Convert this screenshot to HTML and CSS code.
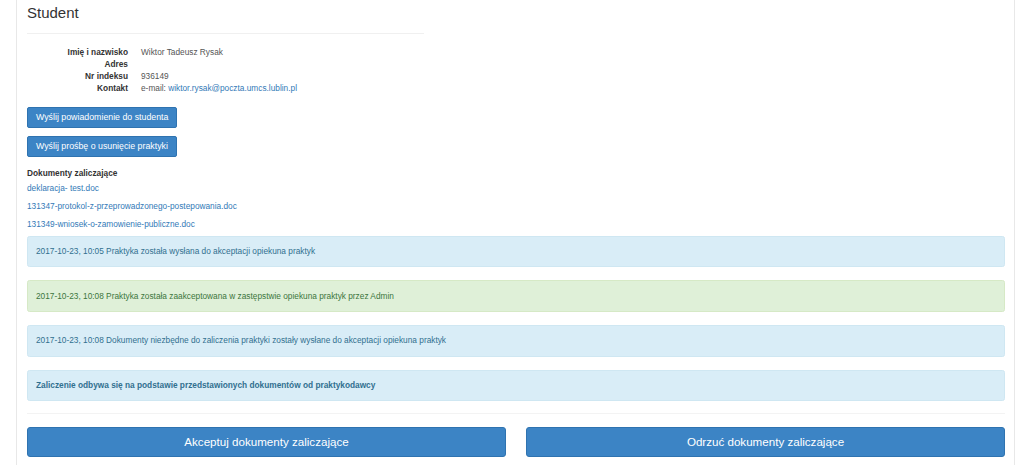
FILE: index.html
```html
<!DOCTYPE html>
<html lang="pl">
<head>
<meta charset="UTF-8">
<meta name="viewport" content="width=device-width, initial-scale=1.0">
<title>Student</title>
<link rel="stylesheet" href="styles.css">
</head>
<body>

<div class="page">
    <div class="header">
        <h3>Student</h3>
        <hr class="header-line">
    </div>

    <dl class="info">
        <dt>Imię i nazwisko</dt>
        <dd>Wiktor Tadeusz Rysak</dd>
        <dt>Adres</dt>
        <dd></dd>
        <dt>Nr indeksu</dt>
        <dd>936149</dd>
        <dt>Kontakt</dt>
        <dd>e-mail: <a href="#">wiktor.rysak@poczta.umcs.lublin.pl</a></dd>
    </dl>

    <div class="actions">
        <button class="btn btn-primary">Wyślij powiadomienie do studenta</button>
        <button class="btn btn-primary">Wyślij prośbę o usunięcie praktyki</button>
    </div>

    <div class="documents">
        <div class="documents-title">Dokumenty zaliczające</div>
        <a href="#">deklaracja- test.doc</a>
        <a href="#">131347-protokol-z-przeprowadzonego-postepowania.doc</a>
        <a href="#">131349-wniosek-o-zamowienie-publiczne.doc</a>
    </div>

    <div class="alert alert-info">2017-10-23, 10:05 Praktyka została wysłana do akceptacji opiekuna praktyk</div>
    <div class="alert alert-success">2017-10-23, 10:08 Praktyka została zaakceptowana w zastępstwie opiekuna praktyk przez Admin</div>
    <div class="alert alert-info">2017-10-23, 10:08 Dokumenty niezbędne do zaliczenia praktyki zostały wysłane do akceptacji opiekuna praktyk</div>
    <div class="alert alert-info"><strong>Zaliczenie odbywa się na podstawie przedstawionych dokumentów od praktykodawcy</strong></div>

    <hr class="footer-line">

    <div class="decision">
        <button class="btn btn-primary btn-lg">Akceptuj dokumenty zaliczające</button>
        <button class="btn btn-primary btn-lg">Odrzuć dokumenty zaliczające</button>
    </div>
</div>

</body>
</html>
```

FILE: styles.css
```css
body {
    font-family: "Liberation Sans", Arial, sans-serif;
    font-size: 8.3px;
    line-height: 12.6px;
    color: #333;
    background-color: #fff;
    margin: 0;
    padding: 0;
    height: 465px;
    overflow: hidden;
}

.page {
    margin-left: 16px;
    width: 978px;
    padding: 0 9px 20px 10px;
    border-left: 1px solid #e8e8e8;
    border-right: 1px solid #e8e8e8;
    min-height: 465px;
}

h3 {
    font-size: 15px;
    font-weight: normal;
    line-height: 16.5px;
    margin: 0;
    padding-top: 4.5px;
    color: #333;
}

.header-line {
    width: 397px;
    margin: 12px 0 0 0;
    border: 0;
    border-top: 1px solid #f0f0f0;
}

.info {
    display: grid;
    grid-template-columns: 101px 1fr;
    column-gap: 13px;
    line-height: 12px;
    margin: 12.3px 0 13px 0;
}

.info dt {
    text-align: right;
    font-weight: bold;
    color: #333;
}

.info dd {
    margin: 0;
    color: #555;
    min-height: 12px;
}

a {
    color: #337ab7;
    text-decoration: none;
}

.actions {
    display: flex;
    flex-direction: column;
    align-items: flex-start;
    gap: 8px;
}

.btn {
    font-family: inherit;
    font-size: 8.8px;
    line-height: 12.6px;
    padding: 3.2px 8px;
    border-radius: 2px;
    border: 1px solid #2f73b0;
    cursor: pointer;
}

.btn-primary {
    background-color: #3c84c5;
    color: #fff;
}

.documents {
    margin-top: 10px;
    margin-bottom: 5px;
}

.documents-title {
    font-weight: bold;
    margin-bottom: 2px;
}

.documents a {
    display: block;
    margin-bottom: 5.4px;
}

.alert {
    padding: 8.5px 8px;
    margin-bottom: 13px;
    border: 1px solid transparent;
    border-radius: 2.5px;
}

.alert-info {
    background-color: #d9edf7;
    border-color: #cfe7f2;
    color: #31708f;
}

.alert-success {
    background-color: #dff0d8;
    border-color: #d6e9c6;
    color: #3c763d;
}

.footer-line {
    margin: -1px 0 13px 0;
    border: 0;
    border-top: 1px solid #f3f3f3;
}

.decision {
    display: grid;
    grid-template-columns: 1fr 1fr;
    column-gap: 20px;
}

.btn-lg {
    font-size: 11.6px;
    line-height: 15.4px;
    padding: 6px 10px;
    border-radius: 3px;
}
```
